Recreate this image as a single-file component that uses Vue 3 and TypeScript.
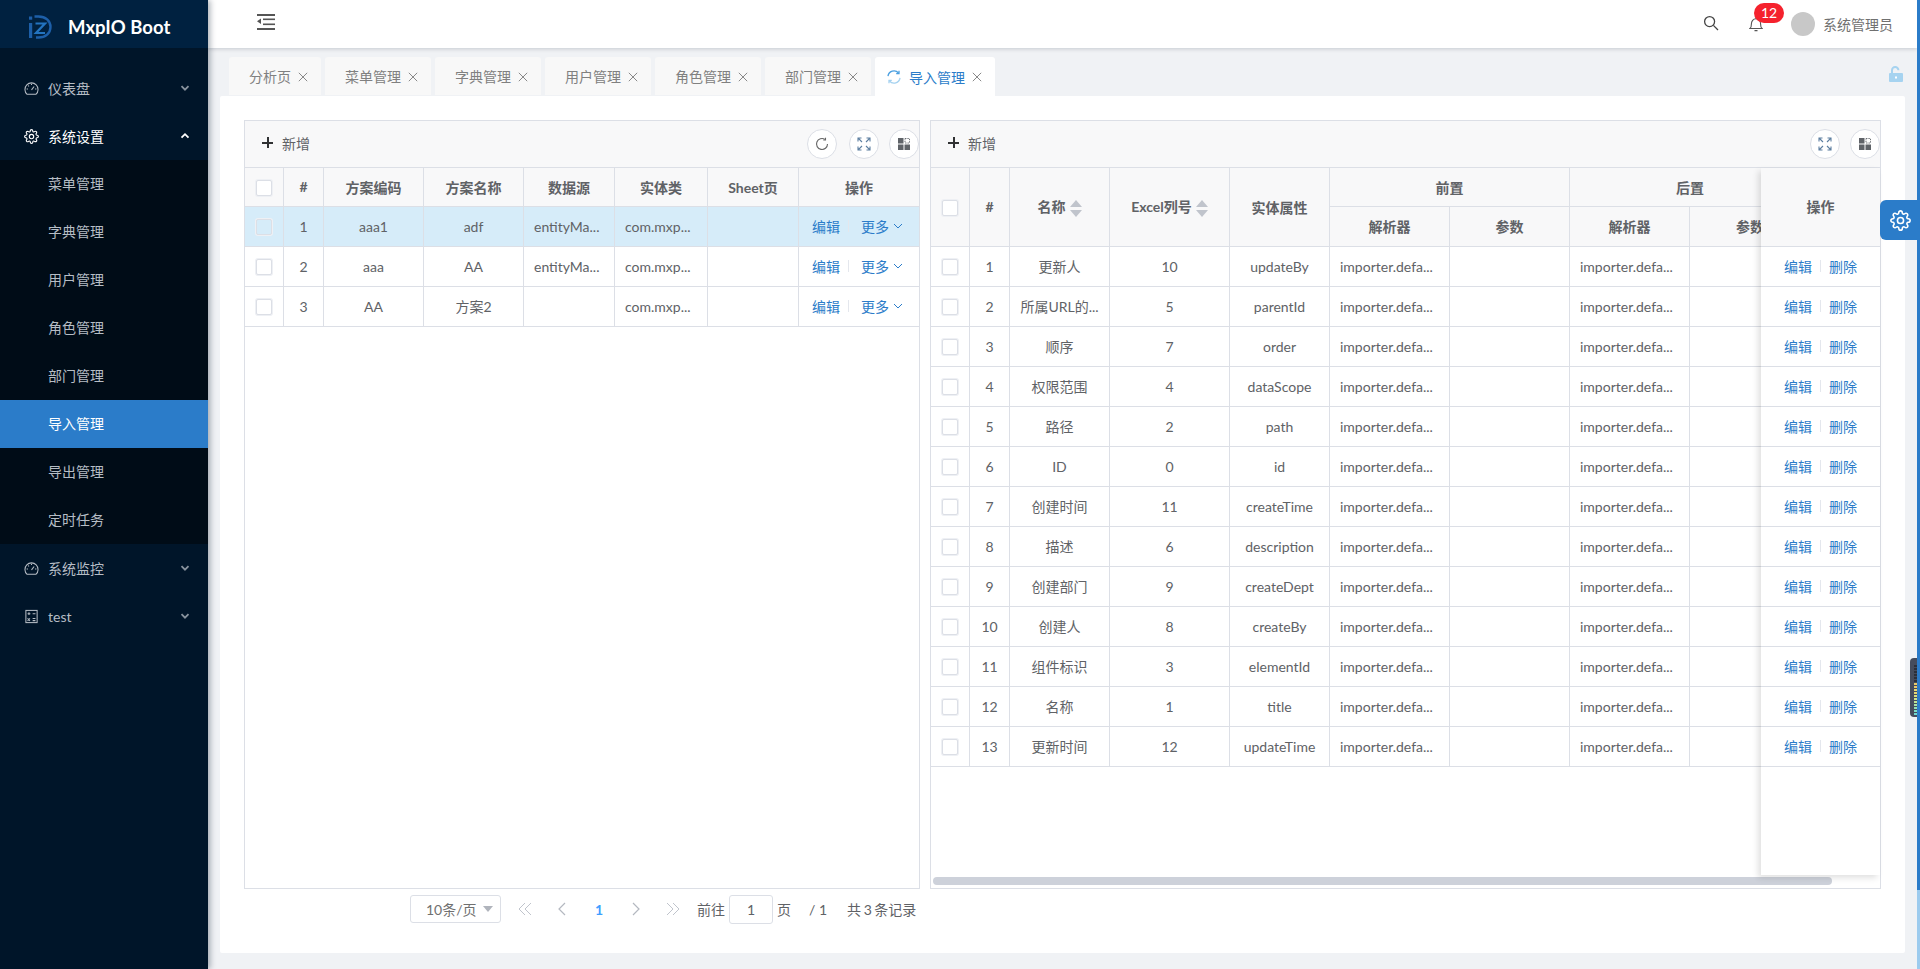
<script setup lang="ts">
const gear = 'M19.4 15a1.65 1.65 0 0 0 .33 1.82l.06.06a2 2 0 0 1 0 2.83 2 2 0 0 1-2.83 0l-.06-.06a1.65 1.65 0 0 0-1.82-.33 1.65 1.65 0 0 0-1 1.51V21a2 2 0 0 1-2 2 2 2 0 0 1-2-2v-.09A1.65 1.65 0 0 0 9 19.4a1.65 1.65 0 0 0-1.82.33l-.06.06a2 2 0 0 1-2.83 0 2 2 0 0 1 0-2.83l.06-.06a1.65 1.65 0 0 0 .33-1.82 1.65 1.65 0 0 0-1.51-1H3a2 2 0 0 1-2-2 2 2 0 0 1 2-2h.09A1.65 1.65 0 0 0 4.6 9a1.65 1.65 0 0 0-.33-1.82l-.06-.06a2 2 0 0 1 0-2.83 2 2 0 0 1 2.83 0l.06.06a1.65 1.65 0 0 0 1.82.33H9a1.65 1.65 0 0 0 1-1.51V3a2 2 0 0 1 2-2 2 2 0 0 1 2 2v.09a1.65 1.65 0 0 0 1 1.51 1.65 1.65 0 0 0 1.82-.33l.06-.06a2 2 0 0 1 2.83 0 2 2 0 0 1 0 2.83l-.06.06a1.65 1.65 0 0 0-.33 1.82V9a1.65 1.65 0 0 0 1.51 1H21a2 2 0 0 1 2 2 2 2 0 0 1-2 2h-.09a1.65 1.65 0 0 0-1.51 1z'
const subs = ['菜单管理', '字典管理', '用户管理', '角色管理', '部门管理', '导入管理', '导出管理', '定时任务']
const tabs = [
  { label: '分析页', w: 92 },
  { label: '菜单管理', w: 106 },
  { label: '字典管理', w: 106 },
  { label: '用户管理', w: 106 },
  { label: '角色管理', w: 106 },
  { label: '部门管理', w: 106 },
]
const leftCols = [39, 40, 100, 100, 91, 93, 91, 120]
const leftHead = ['方案编码', '方案名称', '数据源', '实体类', 'Sheet页']
const leftRows = [
  { n: 1, code: 'aaa1', name: 'adf', ds: 'entityMa...', cls: 'com.mxp...', sel: true },
  { n: 2, code: 'aaa', name: 'AA', ds: 'entityMa...', cls: 'com.mxp...', sel: false },
  { n: 3, code: 'AA', name: '方案2', ds: '', cls: 'com.mxp...', sel: false },
]
const rightCols = [39, 40, 100, 120, 100, 120, 120, 120, 120]
const rightRows = [
  ['更新人', '10', 'updateBy'],
  ['所属URL的...', '5', 'parentId'],
  ['顺序', '7', 'order'],
  ['权限范围', '4', 'dataScope'],
  ['路径', '2', 'path'],
  ['ID', '0', 'id'],
  ['创建时间', '11', 'createTime'],
  ['描述', '6', 'description'],
  ['创建部门', '9', 'createDept'],
  ['创建人', '8', 'createBy'],
  ['组件标识', '3', 'elementId'],
  ['名称', '1', 'title'],
  ['更新时间', '12', 'updateTime'],
]
const meterLines = [
  '#2c303a', '#2c303a', '#2c303a', '#2c303a', '#2c303a', '#2c303a',
  '#e8c96a', '#e8c96a', '#e6d774', '#e6d774', '#d9e07e', '#cfe28a', '#bfe394', '#a8e2a4', '#90e0b4', '#7cdcc4', '#70d8d0',
]
</script>

<template>
  <div class="app">
    <aside class="side">
      <div class="brand">
        <svg class="logo" width="24" height="24" viewBox="0 0 24 24" fill="none">
          <rect x="1" y="1.500" width="3.200" height="3.200" fill="#1d5fa8" />
          <rect x="1" y="8" width="3.200" height="15" fill="#1d5fa8" />
          <path d="M6.500 1.500h4c7 0 12 4.300 12 10.500s-5 10.500-12 10.500H8" stroke="#1d5fa8" stroke-width="2.400" />
          <path d="M7.500 8.500h9.500L8 18h9" stroke="#2374c0" stroke-width="2.200" />
        </svg>
        <span class="brand-name">MxpIO Boot</span>
      </div>
      <nav class="menu">
        <div class="mi">
          <svg class="mi-ic" viewBox="0 0 16 16" fill="none" stroke="currentColor" stroke-width="1.100"><path d="M3.300 14.200a7 7 0 1 1 9.400 0Z" /><path d="M8 9.500 10.800 5.800" /><path d="M2.800 8.500h1.400M11.800 8.500h1.400M8 3v1.300M4.300 4.800l1 1" /></svg>
          <span>仪表盘</span>
          <svg class="chev" viewBox="0 0 10 10" fill="none" stroke="currentColor" stroke-width="1.800"><path d="M1.500 3.200 5 6.700 8.500 3.200" /></svg>
        </div>
        <div class="mi open">
          <svg class="mi-ic" viewBox="0 0 24 24" fill="none" stroke="currentColor" stroke-width="1.800"><path :d="gear" /><circle cx="12" cy="12" r="3.500" /></svg>
          <span>系统设置</span>
          <svg class="chev" viewBox="0 0 10 10" fill="none" stroke="currentColor" stroke-width="1.800"><path d="M1.500 6.700 5 3.200 8.500 6.700" /></svg>
        </div>
        <div class="sub">
          <div v-for="s in subs" :key="s" class="si" :class="{ on: s === '导入管理' }">{{ s }}</div>
        </div>
        <div class="mi">
          <svg class="mi-ic" viewBox="0 0 16 16" fill="none" stroke="currentColor" stroke-width="1.100"><path d="M3.300 14.200a7 7 0 1 1 9.400 0Z" /><path d="M8 9.500 10.800 5.800" /><path d="M2.800 8.500h1.400M11.800 8.500h1.400M8 3v1.300M4.300 4.800l1 1" /></svg>
          <span>系统监控</span>
          <svg class="chev" viewBox="0 0 10 10" fill="none" stroke="currentColor" stroke-width="1.800"><path d="M1.500 3.200 5 6.700 8.500 3.200" /></svg>
        </div>
        <div class="mi">
          <svg class="mi-ic" viewBox="0 0 16 16" fill="none" stroke="currentColor" stroke-width="1.100"><rect x="2" y="1.500" width="12" height="13" /><path d="M3.800 5h3M5.300 3.500v3M9.200 5h3M3.800 10l2.600 2.600M6.400 10l-2.600 2.600M9.200 10.200h3M9.200 12.400h3" /></svg>
          <span>test</span>
          <svg class="chev" viewBox="0 0 10 10" fill="none" stroke="currentColor" stroke-width="1.800"><path d="M1.500 3.200 5 6.700 8.500 3.200" /></svg>
        </div>
      </nav>
    </aside>

    <div class="main">
      <header class="top">
        <svg class="fold" width="18" height="16" viewBox="0 0 18 16" fill="#555"><rect width="18" height="2" y="0" /><rect x="6" width="12" height="1.600" y="4.500" /><rect x="6" width="12" height="1.600" y="9.500" /><rect width="18" height="2" y="14" /><path d="M0 7.300 4 4.500v5.600Z" /></svg>
        <div class="top-right">
          <svg width="16" height="16" viewBox="0 0 16 16" fill="none" stroke="#444" stroke-width="1.300"><circle cx="6.600" cy="6.600" r="5" /><path d="M10.400 10.400 15 15" /></svg>
          <div class="bell">
            <svg width="14" height="16" viewBox="0 0 14 16" fill="none" stroke="#555" stroke-width="1.100"><path d="M1 12.500c1.200-1 1.400-2.200 1.400-4.600C2.400 5 4.200 2.800 7 2.800s4.600 2.200 4.600 5.100c0 2.400.2 3.600 1.400 4.600Z" /><path d="M7 1v1.800M5.500 14.600h3" /></svg>
            <span class="badge">12</span>
          </div>
          <div class="user"><span class="avatar"></span><span class="uname">系统管理员</span></div>
        </div>
      </header>

      <div class="tabbar">
        <div v-for="t in tabs" :key="t.label" class="tab" :style="{ width: t.w + 'px' }">
          <span>{{ t.label }}</span><svg class="x" viewBox="0 0 10 10" stroke="currentColor" fill="none"><path d="M.8.8l8.400 8.400M9.200.8.800 9.200" /></svg>
        </div>
        <div class="tab active">
          <svg class="spin" viewBox="0 0 14 14" fill="none" stroke-width="1.300"><path d="M1 6.200A6 6 0 0 1 11.500 3" stroke="#4a9fe0" /><path d="M13 7.800A6 6 0 0 1 2.500 11" stroke="#a5d2f0" /><path d="M12 .8v2.800H9.200" stroke="#4a9fe0" /><path d="M2 13.200v-2.800h2.800" stroke="#a5d2f0" /></svg>
          <span>导入管理</span><svg class="x" viewBox="0 0 10 10" stroke="currentColor" fill="none"><path d="M.8.8l8.400 8.400M9.200.8.800 9.200" /></svg>
        </div>
        <svg class="lock" width="14" height="16" viewBox="0 0 14 16"><rect y="7" width="14" height="9" rx="1" fill="#a6d3f0" /><path d="M3 7V4.300a3.200 3.200 0 0 1 6.400 0" fill="none" stroke="#a6d3f0" stroke-width="2" /><rect x="6" y="10.500" width="2" height="2" fill="#fff" /></svg>
      </div>

      <section class="content">
        <div class="col-left">
          <div class="panel panel-left">
            <div class="toolbar">
              <div class="add"><span class="plus"></span><span>新增</span></div>
              <div class="tools">
                <button class="round first"><svg width="14" height="14" viewBox="0 0 14 14" fill="none" stroke="#666" stroke-width="1.100"><path d="M12.500 7A5.500 5.500 0 1 1 10 2.400" /><path d="M10.500.8v2.200H8.300" /></svg></button>
                <button class="round"><svg width="14" height="14" viewBox="0 0 14 14" fill="none" stroke="#5c7ea0" stroke-width="1.100"><path d="M1 4.500V1h3.500M13 4.500V1H9.500M1 9.500V13h3.500M13 9.500V13H9.500M1.500 1.500 5 5M12.500 1.500 9 5M1.500 12.500 5 9M12.500 12.500 9 9" /></svg></button>
                <button class="round"><svg width="14" height="14" viewBox="0 0 14 14" fill="#5f6368"><rect x="1" y="1" width="5.500" height="5.500" /><rect x="1" y="7.500" width="5.500" height="5.500" /><rect x="7.500" y="7.500" width="5.500" height="5.500" /><path d="M8 1.500h4.500V6H8Z" fill="none" stroke="#5f6368" stroke-width=".9" stroke-dasharray="1.400 1" /></svg></button>
              </div>
            </div>
            <div class="tbl-wrap">
              <table class="grid">
                <colgroup><col v-for="(w, i) in leftCols" :key="i" :style="{ width: w + 'px' }" /></colgroup>
                <thead>
                  <tr>
                    <th><span class="cb"></span></th>
                    <th>#</th>
                    <th v-for="h in leftHead" :key="h">{{ h }}</th>
                    <th>操作</th>
                  </tr>
                </thead>
                <tbody>
                  <tr v-for="r in leftRows" :key="r.n" :class="{ sel: r.sel }">
                    <td><span class="cb"></span></td>
                    <td>{{ r.n }}</td>
                    <td>{{ r.code }}</td>
                    <td>{{ r.name }}</td>
                    <td class="l">{{ r.ds }}</td>
                    <td class="l">{{ r.cls }}</td>
                    <td></td>
                    <td>
                      <span class="ops">
                        <a>编辑</a><i class="sep"></i><a>更多</a>
                        <svg class="more" viewBox="0 0 10 10" fill="none" stroke="#2b7cc9" stroke-width="1"><path d="M1 3l4 4 4-4" /></svg>
                      </span>
                    </td>
                  </tr>
                </tbody>
              </table>
            </div>
          </div>
          <div class="pager">
            <div class="size">10条/页<span class="caret"></span></div>
            <svg class="pg p1" viewBox="0 0 16 16" fill="none" stroke="#c0c4cc" stroke-width="1"><path d="M8 2 2 8l6 6M14 2 8 8l6 6" /></svg>
            <svg class="pg" viewBox="0 0 16 16" fill="none" stroke="#b4b8c0" stroke-width="1.200"><path d="M11 2 5 8l6 6" /></svg>
            <span class="cur">1</span>
            <svg class="pg" viewBox="0 0 16 16" fill="none" stroke="#b4b8c0" stroke-width="1.200"><path d="m5 2 6 6-6 6" /></svg>
            <svg class="pg" viewBox="0 0 16 16" fill="none" stroke="#c0c4cc" stroke-width="1"><path d="m2 2 6 6-6 6M8 2l6 6-6 6" /></svg>
            <span class="pt goto">前往</span>
            <span class="pinput">1</span>
            <span class="pt">页</span>
            <span class="pt slash">/ 1</span>
            <span class="pt total">共 3 条记录</span>
          </div>
        </div>

        <div class="panel panel-right">
          <div class="toolbar">
            <div class="add"><span class="plus"></span><span>新增</span></div>
            <div class="tools">
              <button class="round"><svg width="14" height="14" viewBox="0 0 14 14" fill="none" stroke="#5c7ea0" stroke-width="1.100"><path d="M1 4.500V1h3.500M13 4.500V1H9.500M1 9.500V13h3.500M13 9.500V13H9.500M1.500 1.500 5 5M12.500 1.500 9 5M1.500 12.500 5 9M12.500 12.500 9 9" /></svg></button>
              <button class="round"><svg width="14" height="14" viewBox="0 0 14 14" fill="#5f6368"><rect x="1" y="1" width="5.500" height="5.500" /><rect x="1" y="7.500" width="5.500" height="5.500" /><rect x="7.500" y="7.500" width="5.500" height="5.500" /><path d="M8 1.500h4.500V6H8Z" fill="none" stroke="#5f6368" stroke-width=".9" stroke-dasharray="1.400 1" /></svg></button>
            </div>
          </div>
          <div class="rbody">
            <div class="rscroll">
              <table class="grid wide">
                <colgroup><col v-for="(w, i) in rightCols" :key="i" :style="{ width: w + 'px' }" /></colgroup>
                <thead>
                  <tr>
                    <th rowspan="2"><span class="cb"></span></th>
                    <th rowspan="2">#</th>
                    <th rowspan="2">名称<span class="sort"><i class="up"></i><i class="down"></i></span></th>
                    <th rowspan="2">Excel列号<span class="sort"><i class="up"></i><i class="down"></i></span></th>
                    <th rowspan="2">实体属性</th>
                    <th colspan="2">前置</th>
                    <th colspan="2">后置</th>
                  </tr>
                  <tr><th>解析器</th><th>参数</th><th>解析器</th><th>参数</th></tr>
                </thead>
                <tbody>
                  <tr v-for="(r, i) in rightRows" :key="i">
                    <td><span class="cb"></span></td>
                    <td>{{ i + 1 }}</td>
                    <td>{{ r[0] }}</td>
                    <td>{{ r[1] }}</td>
                    <td>{{ r[2] }}</td>
                    <td class="l">importer.defa...</td>
                    <td></td>
                    <td class="l">importer.defa...</td>
                    <td></td>
                  </tr>
                </tbody>
              </table>
            </div>
            <div class="rfixed">
              <div class="fh">操作</div>
              <div v-for="(r, i) in rightRows" :key="i" class="fr"><a>编辑</a><i class="sep"></i><a>删除</a></div>
            </div>
          </div>
          <div class="hbar"><span class="thumb"></span></div>
        </div>
      </section>
      <div class="foot"></div>
    </div>

    <div class="edge"></div>
    <div class="gear-tab">
      <svg width="21" height="21" viewBox="0 0 24 24" fill="none" stroke="#fff" stroke-width="1.800"><path :d="gear" /><circle cx="12" cy="12" r="3.500" /></svg>
    </div>
    <div class="meter"><i v-for="(c, i) in meterLines" :key="i" :style="{ background: c }"></i></div>
  </div>
</template>

<style>
html, body { margin: 0; padding: 0; overflow: hidden; }
</style>

<style scoped>
.app {
  display: flex;
  width: 1920px;
  height: 969px;
  overflow: hidden;
  position: relative;
  background: #f0f2f5;
  font-family: Lato, "Noto Sans CJK SC", sans-serif;
  font-size: 14px;
  color: #606266;
}
.side { width: 208px; flex: none; background: #001529; color: #b6bdc5; box-shadow: 2px 0 6px rgba(0, 21, 41, .35); z-index: 3; }
.brand { height: 48px; display: flex; align-items: center; background: #002140; padding: 5px 0 0 28px; box-sizing: border-box; }
.logo { flex: none; }
.brand-name { margin-left: 16px; color: #fff; font-weight: 700; font-size: 18.500px; white-space: nowrap; }
.menu { padding-top: 16px; }
.mi { height: 48px; display: flex; align-items: center; padding-left: 24px; box-sizing: border-box; position: relative; }
.mi.open { color: #fff; }
.mi-ic { width: 15px; height: 15px; margin-right: 9px; flex: none; }
.chev { width: 10px; height: 10px; position: absolute; left: 180px; top: 19px; opacity: .75; }
.open .chev { opacity: 1; }
.sub { background: #000c17; }
.si { height: 48px; line-height: 48px; padding-left: 48px; }
.si.on { background: #2b7cc9; color: #fff; }

.main { width: 1709px; flex: none; display: flex; flex-direction: column; min-width: 0; }
.top { height: 48px; flex: none; background: #fff; box-shadow: 0 1px 4px rgba(0, 21, 41, .18); display: flex; align-items: center; justify-content: space-between; padding: 0 0 0 49px; z-index: 2; position: relative; box-sizing: border-box; }
.fold { margin-top: -4px; }
.top-right { display: flex; align-items: center; }
.top-right > svg { margin-top: -2px; }
.bell { width: 14px; height: 16px; margin-left: 30px; position: relative; }
.bell svg { display: block; }
.badge { position: absolute; left: 5px; top: -13px; height: 20px; min-width: 30px; border-radius: 10px; background: #f5222d; color: #fff; font-size: 14px; line-height: 20px; text-align: center; }
.user { display: flex; align-items: center; margin-left: 28px; padding-right: 24px; }
.avatar { width: 24px; height: 24px; border-radius: 50%; background: #c8c8c8; }
.uname { margin-left: 8px; font-size: 14px; color: #707070; white-space: nowrap; }

.tabbar { height: 48px; flex: none; padding: 9px 0 0 21px; display: flex; gap: 4px; position: relative; box-sizing: border-box; }
.tab { height: 38px; background: #f8f8f8; border-radius: 3px 3px 0 0; display: flex; align-items: center; padding-left: 20px; white-space: nowrap; font-size: 14px; color: #808080; box-sizing: border-box; }
.tab .x { width: 10px; height: 10px; margin-left: 7px; color: #888; margin-top: 1px; flex: none; }
.tab.active { background: #fff; color: #2b7cc9; width: 120px; height: 39px; padding-left: 12px; }
.spin { width: 14px; height: 14px; margin-right: 8px; flex: none; }
.lock { position: absolute; left: 1681px; top: 18px; }

.content { margin: 0 12px; flex: none; height: 857px; background: #fff; border-radius: 2px; padding: 24px 24px 0; box-sizing: border-box; display: flex; gap: 10px; align-items: flex-start; }
.foot { flex: 1; }
.col-left { width: 676px; flex: none; }
.panel { border: 1px solid #dcdfe6; box-sizing: border-box; background: #fff; }
.panel-left { height: 769px; display: flex; flex-direction: column; }
.panel-right { width: 951px; height: 769px; flex: none; display: flex; flex-direction: column; }
.toolbar { height: 47px; flex: none; background: #f8f8f9; border-bottom: 1px solid #dcdfe6; box-sizing: border-box; display: flex; align-items: center; justify-content: space-between; padding: 0 0 0 17px; }
.add { display: flex; align-items: center; color: #606266; margin-bottom: 3px; }
.plus { width: 11px; height: 11px; margin-right: 9px; background: linear-gradient(#303133, #303133) center/100% 2px no-repeat, linear-gradient(#303133, #303133) center/2px 100% no-repeat; }
.tools { display: flex; gap: 10px; }
.first { margin-right: 2px; }
.round { width: 30px; height: 30px; border-radius: 50%; border: 1px solid #dcdfe6; background: #fff; padding: 0; display: flex; align-items: center; justify-content: center; }
.tbl-wrap { flex: 1; min-height: 0; overflow: hidden; }
.grid { border-collapse: separate; border-spacing: 0; table-layout: fixed; width: 674px; }
.grid.wide { width: 879px; }
.grid th, .grid td { border-right: 1px solid #dcdfe6; border-bottom: 1px solid #dcdfe6; box-sizing: border-box; text-align: center; padding: 0 0 1px; white-space: nowrap; overflow: hidden; }
.grid th { background: #f8f8f9; font-weight: 700; height: 39px; color: #606266; }
.grid.wide thead tr:first-child th { height: 39px; }
.grid.wide thead tr:last-child th { height: 40px; }
.grid td { height: 40px; }
.grid td.l { text-align: left; padding-left: 10px; }
.grid tr > *:last-child { border-right: 0; }
.sel td { background: #d6ecf9; }
.cb { display: inline-block; width: 16px; height: 16px; border: 1px solid #dcdfe6; border-radius: 2px; background: #fff; vertical-align: middle; box-sizing: border-box; box-shadow: 0 0 0 1px #eef0f4; }
.sel .cb { background: #d6ecf9; }
.ops { display: flex; align-items: center; padding-left: 13px; }
a { color: #2b7cc9; }
.sep { width: 1px; height: 12px; background: #e4e7ed; margin: 0 8px; display: inline-block; vertical-align: middle; }
.ops .sep { margin: 0 12px 0 8px; }
.more { width: 10px; height: 10px; margin-left: 4px; }
.sort { display: inline-flex; flex-direction: column; gap: 3px; margin-left: 4px; vertical-align: middle; }
.sort i { width: 0; height: 0; border-left: 6px solid transparent; border-right: 6px solid transparent; }
.sort .up { border-bottom: 7px solid #c0c4cc; }
.sort .down { border-top: 7px solid #c0c4cc; }
.rbody { flex: 1; min-height: 0; display: flex; }
.rscroll { flex: 1; min-width: 0; overflow: hidden; }
.rfixed { width: 119px; flex: none; background: #fff; box-shadow: -3px 3px 6px rgba(0, 0, 0, .12); position: relative; }
.fh { height: 79px; line-height: 77px; text-align: center; font-weight: 700; background: #f8f8f9; border-bottom: 1px solid #dcdfe6; box-sizing: border-box; }
.fr { height: 40px; padding-bottom: 1px; border-bottom: 1px solid #dcdfe6; box-sizing: border-box; display: flex; align-items: center; justify-content: center; }
.hbar { height: 13px; flex: none; padding: 2px 2px 0; box-sizing: border-box; }
.thumb { display: block; width: 899px; height: 8px; background: #cdd1da; border-radius: 4px; }

.pager { display: flex; align-items: center; height: 28px; margin-top: 6px; padding-left: 166px; color: #606266; white-space: nowrap; }
.size { width: 91px; height: 28px; border: 1px solid #dcdfe6; border-radius: 3px; box-sizing: border-box; display: flex; align-items: center; padding-left: 15px; position: relative; color: #707070; flex: none; }
.caret { position: absolute; right: 7px; top: 10px; border-left: 5px solid transparent; border-right: 5px solid transparent; border-top: 6px solid #b0b4bc; }
.pg { width: 16px; height: 16px; flex: none; margin-left: 21px; }
.pg.p1 { margin-left: 16px; }
.cur { width: 16px; margin-left: 21px; text-align: center; color: #409eff; font-weight: 700; }
.goto { margin-left: 16px; }
.pinput { width: 44px; height: 29px; line-height: 27px; border: 1px solid #dcdfe6; border-radius: 3px; box-sizing: border-box; text-align: center; margin: 0 4px; flex: none; }
.slash { margin-left: 18px; }
.total { margin-left: 20px; word-spacing: -1px; }

.edge { position: absolute; left: 1917px; top: 0; width: 3px; height: 890px; background: #2b7cc9; z-index: 4; }
.edge::after { content: ""; position: absolute; left: 0; top: 890px; width: 3px; height: 79px; background: #9ccbee; }
.gear-tab { position: absolute; left: 1880px; top: 200px; width: 40px; height: 40px; background: #2b7cc9; border-radius: 6px 0 0 6px; display: flex; align-items: center; justify-content: center; z-index: 5; }
.meter { position: absolute; left: 1910px; top: 658px; width: 7px; height: 59px; background: #454c5c; border-radius: 4px 0 0 4px; display: flex; flex-direction: column; gap: 1px; padding: 7px 0 3px 4px; box-sizing: border-box; z-index: 5; }
.meter i { display: block; height: 2px; flex: none; }
</style>
